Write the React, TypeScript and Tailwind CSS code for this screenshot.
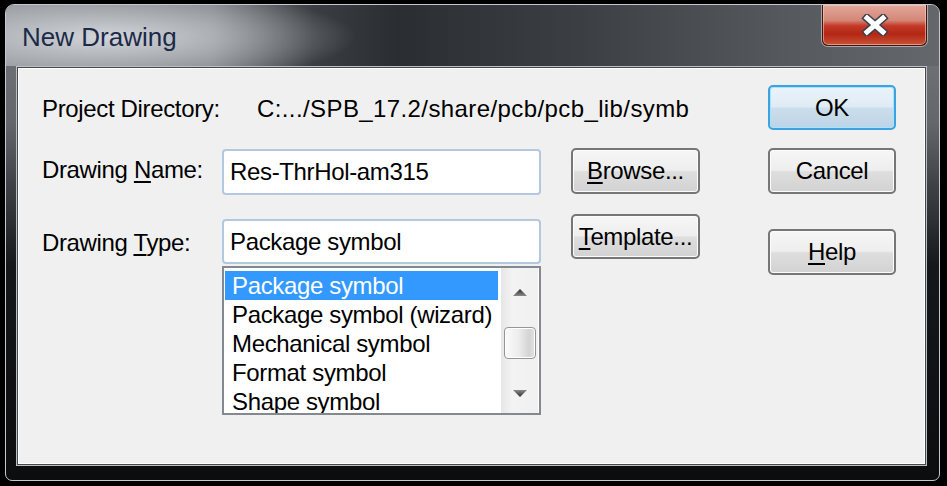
import React from 'react';

const font = "font-['Liberation_Sans',Arial,sans-serif] text-[24px] tracking-[-0.35px] text-black";

function WinButton({ children, primary = false, className = '' }: { children: React.ReactNode; primary?: boolean; className?: string }) {
  return (
    <div
      className={
        'flex items-center justify-center rounded-[5px] border-2 ' +
        (primary
          ? 'border-[#3ca2e2] bg-[linear-gradient(to_bottom,#eaf3fa_0%,#dfebf4_48%,#cbdeec_52%,#bdd4e6_100%)] shadow-[inset_0_0_0_1px_#a9e3fa] '
          : 'border-[#767676] bg-[linear-gradient(to_bottom,#f6f6f6_0%,#eeeeee_48%,#dedede_52%,#d2d2d2_100%)] shadow-[inset_0_0_0_1px_#fcfcfc] ') +
        className
      }
    >
      <span className={font}>{children}</span>
    </div>
  );
}

function U({ children }: { children: React.ReactNode }) {
  return <span className="underline decoration-[2px] underline-offset-[3px]">{children}</span>;
}

const items = ['Package symbol', 'Package symbol (wizard)', 'Mechanical symbol', 'Format symbol', 'Shape symbol'];

export default function App() {
  return (
    <div className="h-[486px] w-[947px] overflow-hidden bg-black pb-[5px] pl-[5px] pr-[7px] pt-[4px]">
      <div className="flex h-full flex-col overflow-hidden rounded-b-[7px] rounded-t-[9px] border border-[#c4c8cc] bg-[linear-gradient(to_bottom,#767a7e_0%,#63676b_25%,#3e4246_38%,#15181b_55%,#0b0d0f_100%)]">
        {/* Title bar */}
        <div className="flex h-[61px] shrink-0 items-start justify-between bg-[radial-gradient(ellipse_250px_48px_at_100px_32px,rgba(214,218,222,0.95),rgba(214,218,222,0)),linear-gradient(to_right,#8a8e92_0%,#7c8084_22%,#3a3e42_33%,#2a2d31_42%,#3c4044_62%,#56595d_84%,#64686c_100%)]">
          <div className="pl-[16px] pt-[17px] font-['Liberation_Sans',Arial,sans-serif] text-[26px] leading-[30px] text-[#1c2a48]">
            New Drawing
          </div>
          <div className="mr-[12px] flex h-[41px] w-[105px] items-center justify-center rounded-b-[6px] border border-t-0 border-[#3c1410] bg-[linear-gradient(to_bottom,#e3a69a_0%,#d48878_38%,#c43a28_52%,#b22614_72%,#c85236_100%)] shadow-[0_0_0_1px_rgba(230,230,230,0.55),inset_0_0_0_1px_rgba(255,210,200,0.55)]">
            <svg width="28" height="22" viewBox="0 0 28 22">
              <path d="M6 4 L22 18 M22 4 L6 18" stroke="#3a3f4e" strokeWidth="8" strokeLinecap="square" />
              <path d="M6 4 L22 18 M22 4 L6 18" stroke="#ffffff" strokeWidth="5" strokeLinecap="square" />
            </svg>
          </div>
        </div>

        {/* Client area */}
        <div className="mb-[15px] ml-[11px] mr-[13px] mt-[1px] flex flex-1 items-start border border-[#44484c] bg-[#f0f0f0] shadow-[0_0_0_1px_#bcc0c4,inset_0_0_0_1px_#ffffff]">
          <div className="ml-[24px] mt-[22px] flex w-[658px] flex-col">
            {/* Project directory */}
            <div className="flex h-[38px] items-center">
              <span className={font + ' w-[215px]'}>Project Directory:</span>
              <span className={font + ' !tracking-[0.4px]'}>C:.../SPB_17.2/share/pcb/pcb_lib/symb</span>
            </div>

            {/* Drawing name */}
            <div className="mt-[20px] flex h-[48px] items-center">
              <span className={font + ' mb-[4px] w-[180px]'}>
                Drawing <U>N</U>ame:
              </span>
              <div className="flex h-[46px] w-[319px] items-center rounded-[4px] border-2 border-[#b1c8e0] bg-white pl-[6px]">
                <span className={font}>Res-ThrHol-am315</span>
              </div>
              <WinButton className="mb-[2px] ml-[30px] h-[46px] w-[129px]">
                <U>B</U>rowse...
              </WinButton>
            </div>

            {/* Drawing type */}
            <div className="mt-[18px] flex h-[50px] items-start">
              <span className={font + ' mt-[11px] w-[180px]'}>
                Drawing <U>T</U>ype:
              </span>
              <div className="mt-[5px] flex h-[45px] w-[319px] items-center rounded-[4px] border-2 border-[#b1c8e0] bg-white pl-[6px]">
                <span className={font}>Package symbol</span>
              </div>
              <WinButton className="ml-[30px] h-[45px] w-[129px]">
                <U>T</U>emplate...
              </WinButton>
            </div>

            {/* List box */}
            <div className="ml-[180px] mt-[2px] flex h-[149px] w-[319px] overflow-hidden border-2 border-[#85898f] bg-white">
              <div className="flex flex-1 flex-col px-[1px] pt-[3px]">
                {items.map((item, i) => (
                  <div
                    key={item}
                    className={
                      'flex h-[29px] shrink-0 items-center pl-[7px] ' + (i === 0 ? 'mr-[2px] bg-[#3399ff]' : '')
                    }
                  >
                    <span className={font + (i === 0 ? ' !text-white' : '')}>{item}</span>
                  </div>
                ))}
              </div>
              <div className="mr-[1px] flex w-[37px] flex-col items-center bg-[linear-gradient(to_right,#e6e6e6,#f3f3f3_30%,#f0f0f0)]">
                <div className="flex h-[48px] items-center">
                  <svg width="16" height="9" viewBox="0 0 16 9">
                    <defs>
                      <linearGradient id="arrUp" x1="0" y1="0" x2="0" y2="1">
                        <stop offset="0" stopColor="#2e2e2e" />
                        <stop offset="1" stopColor="#8a8a8a" />
                      </linearGradient>
                    </defs>
                    <path d="M8 1 L15 8 L1 8 Z" fill="url(#arrUp)" />
                  </svg>
                </div>
                <div className="mt-[11px] h-[32px] w-[32px] rounded-[4px] border border-[#959595] bg-[linear-gradient(to_right,#fbfbfb_0%,#ededed_45%,#d4d4d4_80%,#e2e2e2_100%)] shadow-[inset_0_0_0_1px_#ffffff]" />
                <div className="flex-1" />
                <div className="flex h-[40px] items-center">
                  <svg width="16" height="9" viewBox="0 0 16 9">
                    <defs>
                      <linearGradient id="arrDn" x1="0" y1="0" x2="0" y2="1">
                        <stop offset="0" stopColor="#8a8a8a" />
                        <stop offset="1" stopColor="#2e2e2e" />
                      </linearGradient>
                    </defs>
                    <path d="M1 1 L15 1 L8 8 Z" fill="url(#arrDn)" />
                  </svg>
                </div>
              </div>
            </div>
          </div>

          {/* Right buttons */}
          <div className="ml-[68px] mt-[17px] flex flex-col">
            <WinButton primary className="h-[45px] w-[128px]">
              OK
            </WinButton>
            <WinButton className="mt-[18px] h-[46px] w-[128px]">Cancel</WinButton>
            <WinButton className="mt-[35px] h-[46px] w-[128px]">
              <U>H</U>elp
            </WinButton>
          </div>
        </div>
      </div>
    </div>
  );
}
